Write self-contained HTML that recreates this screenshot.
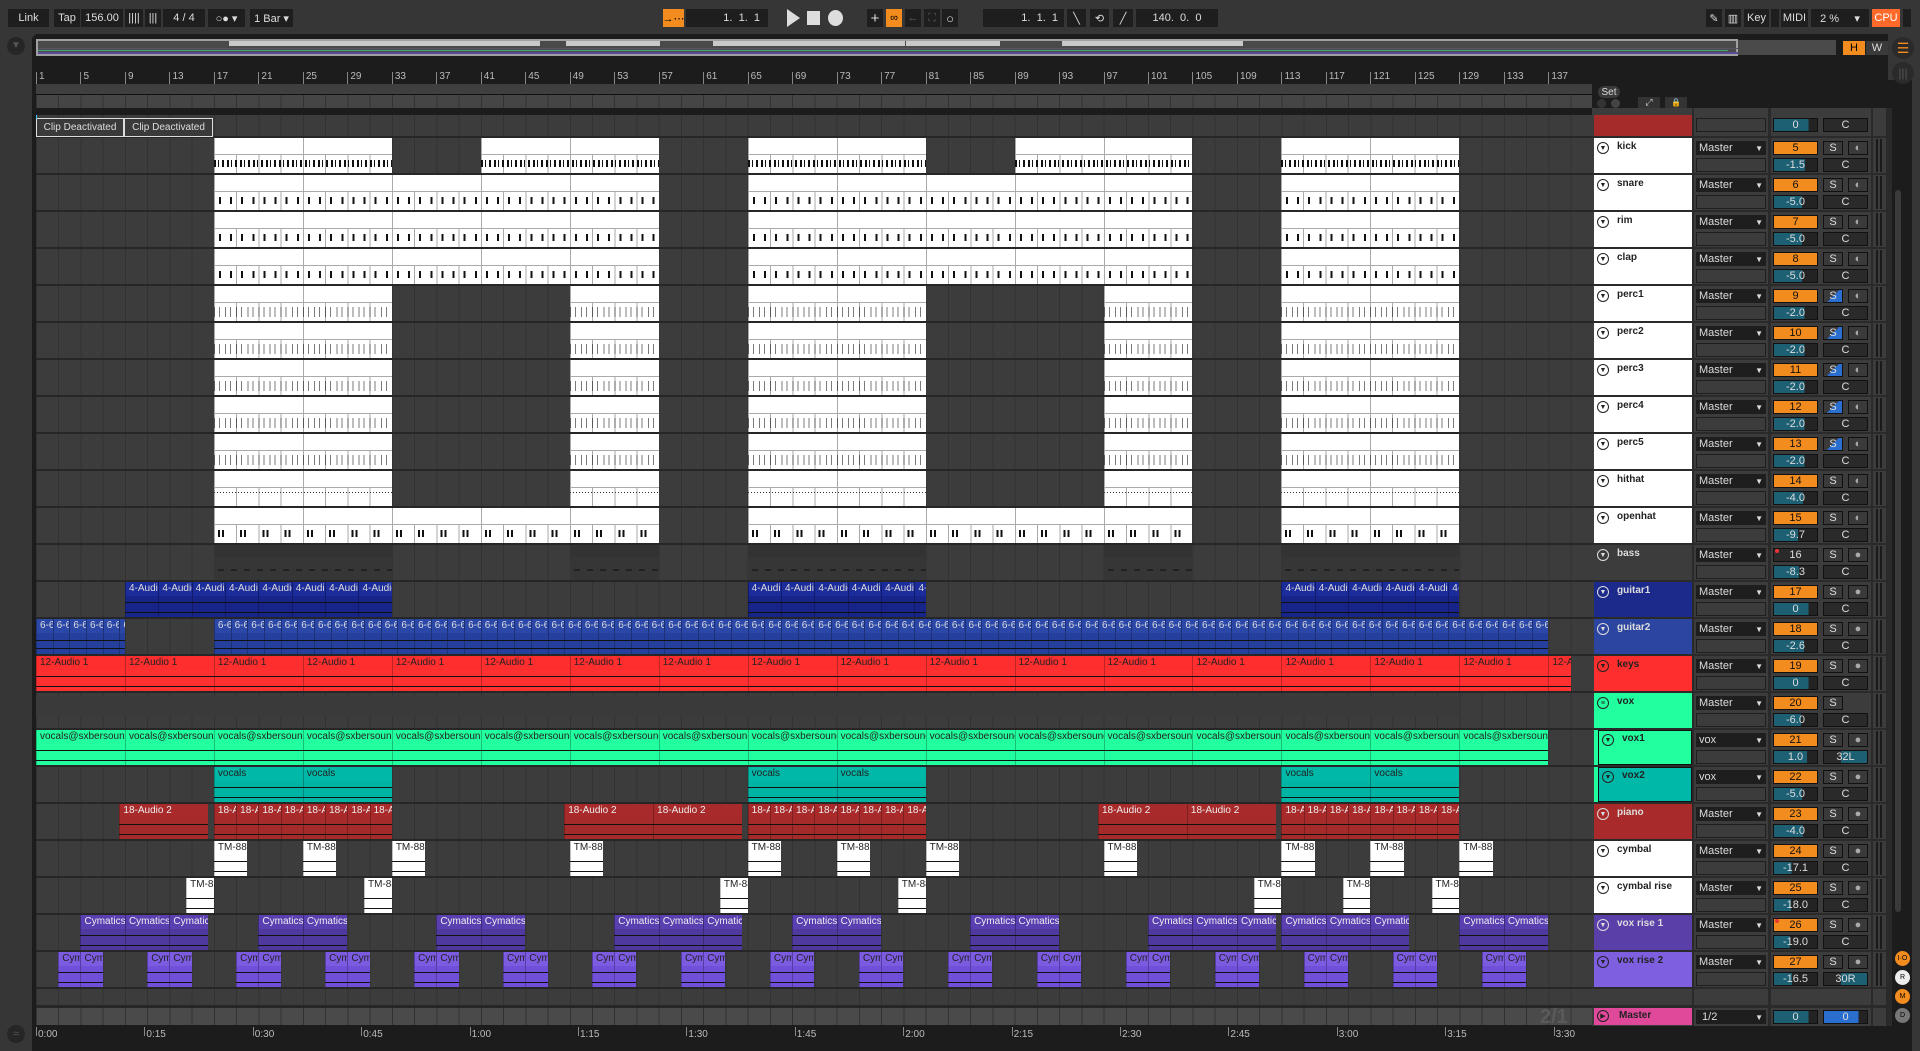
<!DOCTYPE html>
<html><head><meta charset="utf-8">
<style>
*{margin:0;padding:0;box-sizing:border-box}
body{width:1920px;height:1051px;overflow:hidden;background:#363636;font-family:"Liberation Sans",sans-serif;font-size:11px;color:#ddd;position:relative}
.a{position:absolute}
.bx{position:absolute;background:#1e1e1e;color:#ddd;font-size:11px;display:flex;align-items:center;justify-content:center;white-space:nowrap;overflow:hidden}
.clip{position:absolute;overflow:hidden}
.seg{position:absolute;top:0;height:100%;overflow:hidden;border-left:1px solid rgba(0,0,0,.25)}
.ttl{position:absolute;left:3px;top:1px;font-size:10px;white-space:nowrap}
</style></head><body>
<div id="root"></div>
<script>
const R=document.getElementById('root');
function el(x,y,w,h,st,txt,cls){const d=document.createElement('div');d.className=cls||'a';d.style.cssText=`left:${x}px;top:${y}px;width:${w}px;height:${h}px;`+(st||'');if(txt!==undefined)d.innerHTML=txt;R.appendChild(d);return d;}
function bx(x,y,w,h,txt,st){return el(x,y,w,h,st||'',txt,'bx');}
const X=b=>36+(b-1)*11.12;
const T=i=>138+i*37;
el(32,34,1880,1017,'background:#1c1c1c;border-radius:6px 6px 0 0');
el(1888,34,32,46,'background:#363636');
el(0,0,1920,34,'background:#363636');
[[8,41,'Link'],[54,26,'Tap'],[81,42,'156.00'],[125,18,'||||'],[145,16,'|||'],[163,42,'4 / 4'],[208,37,'○● ▾'],[250,43,'1 Bar ▾']].forEach(a=>bx(a[0],9,a[1],18,a[2]));
bx(663,9,21,18,'→⋯','background:#f28c1e;color:#000');
bx(686,9,82,18,'1.&nbsp;&nbsp;1.&nbsp;&nbsp;1','justify-content:flex-end;padding-right:8px');
el(787,9,0,18,'border-left:13px solid #ddd;border-top:9px solid transparent;border-bottom:9px solid transparent;height:0;top:9px');
el(807,11,13,14,'background:#ddd');
el(828,10,15,16,'background:#ddd;border-radius:50%');
bx(867,9,16,18,'+','font-size:15px');
bx(886,9,16,18,'∞','background:#f28c1e;color:#000');
bx(905,9,16,18,'←','color:#666');
bx(924,9,16,18,'⛶','color:#555');
bx(942,9,16,18,'○','font-size:13px');
bx(983,9,81,18,'1.&nbsp;&nbsp;1.&nbsp;&nbsp;1','justify-content:flex-end;padding-right:6px');
bx(1067,9,19,18,'╲');bx(1090,9,19,18,'⟲');bx(1113,9,20,18,'╱');
bx(1136,9,82,18,'140.&nbsp;&nbsp;0.&nbsp;&nbsp;0');
bx(1706,9,16,18,'✎');bx(1725,9,16,18,'▥');bx(1744,9,25,18,'Key');bx(1771,9,8,18,'');bx(1781,9,27,18,'MIDI');
bx(1811,9,58,18,'2 %&nbsp;&nbsp;&nbsp;&nbsp;&nbsp;▾');bx(1872,9,28,18,'CPU','background:#ff6a2a;color:#fff');bx(1903,9,8,18,'');
el(7,37,18,18,'background:#262626;border-radius:50%;color:#555;font-size:10px;text-align:center;line-height:18px','▼');
el(7,1025,18,18,'background:#262626;border-radius:50%;color:#555;font-size:11px;text-align:center;line-height:18px','≈');
el(36,40,1800,15,'background:#4a4a4a');
el(36,39,1702,17,'border:2px solid #a0a0a0');
[[229,422],[422,540],[566,660],[713,905],[906,1000],[1062,1243]].forEach(s=>el(s[0],41,s[1]-s[0],5,'background:#c8c8c8'));
el(38,48,1700,1,'background:#556');el(38,50,1690,1,'background:#4a7');el(38,52,1700,2,'background:#5a4a9a');
bx(1843,41,22,14,'H','background:#f28c1e;color:#000');bx(1866,41,22,14,'W','background:#3a3a3a');
el(1892,37,22,22,'background:#2a2a2a;border-radius:50%;color:#f28c1e;font-size:14px;text-align:center;line-height:22px','☰');
el(1892,62,22,22,'background:#2a2a2a;border-radius:50%;color:#555;font-size:12px;text-align:center;line-height:22px','|||');
let rh='';
for(let n=1;n<=137;n+=4){rh+=`<div class="a" style="left:${X(n)}px;top:72px;height:12px;border-left:1px solid #888"></div><div class="a" style="left:${X(n)+3}px;top:71px;color:#bbb;font-size:10px">${n}</div>`;}
R.insertAdjacentHTML('beforeend',rh);
el(36,84,1556,11,'background:#3f3f3f;border-bottom:1px solid #111');
const grid='background-color:#3c3c3c;background-image:repeating-linear-gradient(90deg,#323232 0 1px,transparent 1px 22.24px);background-position:0 0';
el(36,95,1556,13,grid+';background-color:#454545');
el(36,115,1556,875,grid);
for(let i=0;i<=23;i++)el(36,T(i)-2,1556,2,'background:#262626');
el(36,136,1556,2,'background:#262626');
el(36,990,1556,15,grid);
el(36,1005,1556,3,'background:#262626');
el(36,1008,1556,17,grid+';background-color:#4a4a4a');
el(1540,1006,50,20,'color:#5a5a5a;font-size:20px;font-weight:bold','2/1');
let th='';const tl=['0:00','0:15','0:30','0:45','1:00','1:15','1:30','1:45','2:00','2:15','2:30','2:45','3:00','3:15','3:30'];
tl.forEach((t,k)=>{const x=36+k*108.4;th+=`<div class="a" style="left:${x}px;top:1027px;height:9px;border-left:1px solid #888"></div><div class="a" style="left:${x+2}px;top:1029px;color:#bbb;font-size:10px">${t}</div>`;});
R.insertAdjacentHTML('beforeend',th);
bx(36,118,88,19,'Clip Deactivated','background:#3a3a3a;border:1px solid #ddd;font-size:10px');
bx(124,118,89,19,'Clip Deactivated','background:#3a3a3a;border:1px solid #ddd;font-size:10px');
el(36,115,1,4,'background:#3cf');
function midi(i,b0,b1,kind){
 const x=X(b0),w=X(b1)-x,t=T(i);
 let tick;
 if(kind=='kick')tick='repeating-linear-gradient(90deg,#111 0 2px,transparent 2px 4px,#111 4px 5px,transparent 5px 8px,#111 8px 10px,transparent 10px 13px)';
 else if(kind=='sn')tick='repeating-linear-gradient(90deg,transparent 0 5px,#111 5px 7px,transparent 7px 11.12px)';
 else if(kind=='oh')tick='repeating-linear-gradient(90deg,transparent 0 4px,#111 4px 6px,transparent 6px 8px,#111 8px 10px,transparent 10px 22.24px)';
 else if(kind=='hh')tick='repeating-linear-gradient(90deg,#333 0 1px,transparent 1px 3px)';
 else tick='repeating-linear-gradient(90deg,#222 0 1px,transparent 1px 5px,#222 5px 6px,transparent 6px 11.12px)';
 const c=el(x,t,w,35,'background:#fff','', 'clip');
 c.innerHTML=`<div class="a" style="left:0;top:16px;width:100%;height:1px;background:#aaa"></div>
 <div class="a" style="left:0;top:17px;width:100%;height:18px;background-image:repeating-linear-gradient(90deg,#aaa 0 1px,transparent 1px 22.24px)"></div>
 <div class="a" style="left:0;top:${kind=='hh'?21:kind=='perc'?21:22}px;width:100%;height:${kind=='hh'?1:kind=='perc'?10:7}px;background-image:${tick};${kind=='perc'?'opacity:.6':''}"></div>
 <div class="a" style="left:0;top:0;width:100%;height:16px;background-image:repeating-linear-gradient(90deg,#aaa 0 1px,transparent 1px 88.96px)"></div>`;
}
const dr1=[[17,33],[41,57],[65,81],[89,105],[113,129]];
const dr2=[[17,57],[65,105],[113,129]];
const dr3=[[17,33],[49,57],[65,81],[97,105],[113,129]];
dr1.forEach(r=>midi(0,r[0],r[1],'kick'));
[1,2,3].forEach(i=>dr2.forEach(r=>midi(i,r[0],r[1],'sn')));
[4,5,6,7,8].forEach(i=>dr3.forEach(r=>midi(i,r[0],r[1],'perc')));
dr3.forEach(r=>midi(9,r[0],r[1],'hh'));
dr2.forEach(r=>midi(10,r[0],r[1],'oh'));
dr3.forEach(r=>{const x=X(r[0]),w=X(r[1])-x;el(x,T(11),w,35,'background:#363636;background-image:linear-gradient(#333 0 12px,transparent 12px),repeating-linear-gradient(90deg,transparent 0 4px,#222 4px 10px,transparent 10px 13px);background-size:100% 100%,100% 2px;background-position:0 0,0 24px;background-repeat:no-repeat','','clip');});
function audio(i,b0,b1,step,label,bg,body,tc,lines){
 const x=X(b0),w=X(b1)-x,t=T(i);
 const c=el(x,t,w,35,`background:${body}`,'','clip');
 let h='';
 for(let b=b0;b<b1-0.01;b+=step){const sx=X(b)-x,sw=Math.min(X(b+step),X(b1))-X(b);
  h+=`<div class="seg" style="left:${sx}px;width:${sw}px"><div class="a" style="left:0;top:0;width:100%;height:14px;background:${bg}"></div><div class="ttl" style="color:${tc}">${label}</div></div>`;}
 h+=`<div class="a" style="left:0;top:${lines[0]}px;width:100%;height:1px;background:#111"></div><div class="a" style="left:0;top:${lines[1]}px;width:100%;height:1px;background:#111"></div>`;
 c.innerHTML=h;
}
[[9,33],[65,81],[113,129]].forEach(r=>audio(12,r[0],r[1],3,'4-Audio 1','#1c2c9a','#17258a','#ddd',[20,30]));
[[1,9],[17,137]].forEach(r=>audio(13,r[0],r[1],1.5,'6-6-Audio','#2b48a8','#24409c','#ddd',[21,29]));
audio(14,1,139,8,'12-Audio 1','#ff2e2e','#ff3030','#222',[20,30]);
el(X(1),T(15)+3,X(129)-X(1),20,'background:#3a3a3a');
audio(16,1,137,8,'vocals@sxbersound','#22ff9f','#22ff9f','#222',[20,30]);
[[17,33],[65,81],[113,129]].forEach(r=>audio(17,r[0],r[1],8,'vocals','#00b8a8','#00b4a4','#222',[20,30]));
[[8.5,16.5],[48.5,56.5],[56.5,64.5],[96.5,104.5],[104.5,112.5]].forEach(r=>audio(18,r[0],r[1],8,'18-Audio 2','#a82a2a','#a52a2a','#eee',[20,30]));
[[17,33],[65,81],[113,129]].forEach(r=>audio(18,r[0],r[1],2,'18-Audio','#a82a2a','#a52a2a','#eee',[20,30]));
[17,25,33,49,65,73,81,97,113,121,129].forEach(b=>audio(19,b,b+3,3,'TM-88','#fff','#fff','#222',[20,30]));
[17,33,65,81,113,121,129].forEach(b=>audio(20,b-2.5,b,3,'TM-88','#fff','#fff','#222',[20,30]));
[[5,16.5],[21,29],[37,45],[53,64.5],[69,77],[85,93],[101,112.5],[113,124.5],[129,137]].forEach(r=>audio(21,r[0],r[1],4,'Cymatics','#5a3fb0','#4f389e','#eee',[20,30]));
for(let b=3;b<=131;b+=8)audio(22,b,b+4,2,'Cym','#7b5ce0','#7050d8','#222',[20,30]);
el(1592,84,300,24,'background:#1c1c1c');
bx(1598,86,22,12,'Set','background:#3a3a3a;border-radius:6px;font-size:10px');
el(1597,99,9,9,'background:#333;border-radius:50%');el(1611,99,9,9,'background:#444;border-radius:50%');
bx(1638,97,22,11,'⤢','background:#333;font-size:9px');bx(1665,97,22,11,'🔒','background:#333;font-size:8px');
el(1592,108,300,918,'background:#3c3c3c');
el(1692,108,2,918,'background:#2a2a2a');el(1768,108,3,918,'background:#2a2a2a');el(1871,108,2,918,'background:#2a2a2a');
for(let i=0;i<=23;i++)el(1592,T(i)-2,300,2,'background:#2a2a2a');
el(1592,1005,300,3,'background:#2a2a2a');
el(1886,108,6,918,'background:#2a2a2a');
el(1895,190,6,722,'background:#3a3a3a;border-radius:3px');
[['I·O','#f28c1e','#000',951],['R','#eee','#000',970],['M','#f28c1e','#000',989],['D','#777','#000',1008]].forEach(a=>el(1895,a[3],15,15,`background:${a[1]};color:${a[2]};border-radius:50%;font-size:7px;text-align:center;line-height:15px`,a[0]));
const tr=[
['kick','#fff','#222',5,'-1.5'],['snare','#fff','#222',6,'-5.0'],['rim','#fff','#222',7,'-5.0'],['clap','#fff','#222',8,'-5.0'],
['perc1','#fff','#222',9,'-2.0',1],['perc2','#fff','#222',10,'-2.0',1],['perc3','#fff','#222',11,'-2.0',1],['perc4','#fff','#222',12,'-2.0',1],['perc5','#fff','#222',13,'-2.0',1],
['hithat','#fff','#222',14,'-4.0'],['openhat','#fff','#222',15,'-9.7'],['bass','#3c3c3c','#ddd',16,'-8.3',0,'dark'],
['guitar1','#1c2a8c','#ddd',17,'0',0,'g'],['guitar2','#2c45a0','#ddd',18,'-2.6',0,'g'],['keys','#ff2e2e','#222',19,'0',0,'g'],
['vox','#22ff9f','#222',20,'-6.0',0,'grp'],['vox1','#22ff9f','#222',21,'1.0',0,'g','vox','32L'],['vox2','#00b8a8','#222',22,'-5.0',0,'g','vox'],
['piano','#a82a2a','#ddd',23,'-4.0',0,'g'],['cymbal','#fff','#222',24,'-17.1',0,'g'],['cymbal rise','#fff','#222',25,'-18.0',0,'g'],
['vox rise 1','#5a3fa8','#ddd',26,'-19.0',0,'g'],['vox rise 2','#7d5fe0','#222',27,'-16.5',0,'g','Master','30R']];
function vol(x,y,v,col){const n=parseFloat(v);const pct=v=='0'?80:Math.max(25,75+n*2);return `<div class="bx" style="left:${x}px;top:${y}px;width:45px;height:14px;background:linear-gradient(90deg,${col||'#1d5f73'} ${pct}%,#232323 ${pct}%);border:1px solid #111">${v}</div>`;}
let hh='';
hh+=`<div class="a" style="left:1594px;top:115px;width:98px;height:21px;background:#a52a2a"></div><div class="a" style="left:1696px;top:118px;width:70px;height:14px;background:#3c3c3c;border:1px solid #1e1e1e"></div>`+vol(1773,118,'0')+`<div class="bx" style="left:1823px;top:118px;width:45px;height:14px;background:#2a2a2a;border:1px solid #111">C</div>`;
tr.forEach((d,i)=>{const t=T(i);const [nm,bg,tc,num,v,sb,kind,rt,pan]=d;
 const inset=(nm=='vox1'||nm=='vox2');
 hh+=`<div class="a" style="left:1594px;top:${t}px;width:98px;height:35px;background:${bg}"></div>`;
 if(inset)hh+=`<div class="a" style="left:1594px;top:${t}px;width:4px;height:35px;background:#22ff9f"></div><div class="a" style="left:1598px;top:${t}px;width:94px;height:35px;border:1px solid #111"></div>`;
 const ix=inset?1602:1597;
 hh+=`<div class="a" style="left:${ix}px;top:${t+4}px;width:12px;height:12px;border:1px solid ${tc};border-radius:50%;color:${tc};font-size:7px;text-align:center;line-height:11px">${kind=='grp'?'≡':'▼'}</div>`;
 hh+=`<div class="a" style="left:${ix+20}px;top:${t+3}px;color:${tc};font-size:10px;font-weight:bold">${nm}</div>`;
 hh+=`<div class="bx" style="left:1696px;top:${t+3}px;width:70px;height:14px;justify-content:space-between;padding:0 3px">${rt||'Master'}<span style="font-size:8px">▼</span></div>`;
 hh+=`<div class="a" style="left:1696px;top:${t+20}px;width:70px;height:14px;background:#3c3c3c;border:1px solid #1e1e1e"></div>`;
 hh+=`<div class="bx" style="left:1773px;top:${t+3}px;width:45px;height:14px;background:${kind=='dark'?'#2a2a2a':'#f28c1e'};color:${kind=='dark'?'#ddd':'#111'};border:1px solid #111">${num}</div>`;
 if(kind=='dark'||num==26)hh+=`<div class="a" style="left:1775px;top:${t+4}px;width:4px;height:4px;background:#e33;border-radius:50%"></div>`;
 hh+=vol(1773,t+20,v);
 hh+=`<div class="bx" style="left:1823px;top:${t+3}px;width:20px;height:14px;background:${sb?'linear-gradient(135deg,#3a3a3a 50%,#2a6fd0 50%)':'#3a3a3a'};border:1px solid #111">S</div>`;
 if(kind!='grp')hh+=`<div class="bx" style="left:1848px;top:${t+3}px;width:20px;height:14px;background:#3a3a3a;border:1px solid #111;color:#aaa">${kind?'●':'◐'}</div>`;
 hh+=`<div class="bx" style="left:1823px;top:${t+20}px;width:45px;height:14px;background:${pan?'linear-gradient(90deg,#2a2a2a 40%,#1d5f73 40%)':'#2a2a2a'};border:1px solid #111">${pan||'C'}</div>`;
 hh+=`<div class="a" style="left:1876px;top:${t+1}px;width:2px;height:33px;background:#1a1a1a"></div><div class="a" style="left:1880px;top:${t+1}px;width:2px;height:33px;background:#1a1a1a"></div>`;
});
hh+=`<div class="a" style="left:1594px;top:1008px;width:98px;height:17px;background:#e0489a"></div><div class="a" style="left:1597px;top:1010px;width:12px;height:12px;border:1px solid #222;border-radius:50%;font-size:7px;color:#222;text-align:center;line-height:11px">▶</div><div class="a" style="left:1619px;top:1010px;color:#222;font-size:10px;font-weight:bold">Master</div>`;
hh+=`<div class="bx" style="left:1696px;top:1010px;width:70px;height:14px;justify-content:space-between;padding:0 3px">&nbsp;1/2<span style="font-size:8px">▼</span></div>`+vol(1773,1010,'0')+`<div class="bx" style="left:1823px;top:1010px;width:45px;height:14px;background:linear-gradient(90deg,#2a6fd0 80%,#232323 80%);border:1px solid #111">0</div>`;
R.insertAdjacentHTML('beforeend',hh);
</script>
</body></html>
